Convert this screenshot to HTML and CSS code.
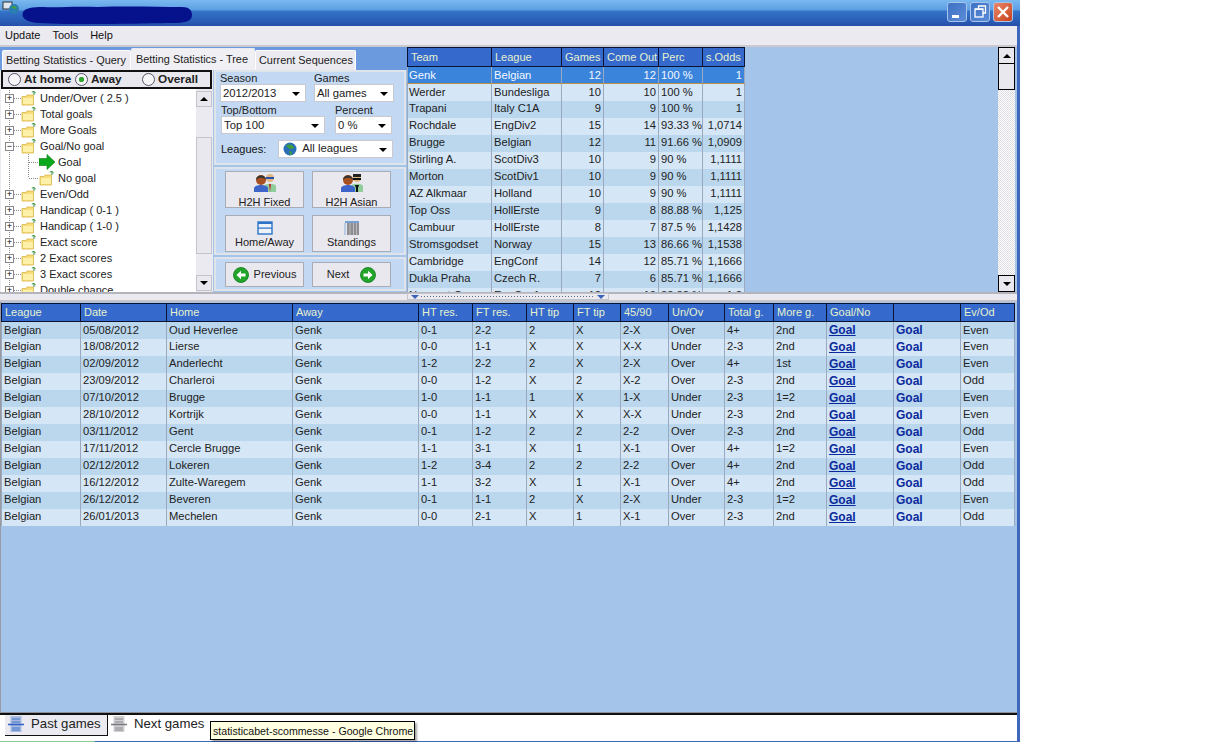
FILE: index.html
```html
<!DOCTYPE html>
<html lang="en">
<head>
<meta charset="utf-8">
<title>Betting Statistics</title>
<link rel="stylesheet" href="styles.css">
</head>
<body>
<svg class="defs" width="0" height="0" aria-hidden="true">
  <symbol id="folder" viewBox="0 0 16 16">
    <path d="M1 6.500h4l1-1.500h6.500v10H1z" fill="#f8dc78" stroke="#d8b850" stroke-width=".8"/>
    <path d="M2 8h10v6H2z" fill="#fdf0a8"/>
    <path d="M13 5V1.500M13 1.500l-2.200.6M13 1.500l1.800 1.600" stroke="#2f8f3f" stroke-width="1" fill="none"/>
  </symbol>
  <symbol id="green-left" viewBox="0 0 16 16">
    <circle cx="8" cy="8" r="7.500" fill="#22a52a" stroke="#0d7a1a" stroke-width=".8"/>
    <path d="M3.500 8 8 3.800v2.700h4.500v3H8v2.700z" fill="#fff"/>
  </symbol>
  <symbol id="green-right" viewBox="0 0 16 16">
    <circle cx="8" cy="8" r="7.500" fill="#22a52a" stroke="#0d7a1a" stroke-width=".8"/>
    <path d="M12.500 8 8 3.800v2.700H3.500v3H8v2.700z" fill="#fff"/>
  </symbol>
  <symbol id="sheet" viewBox="0 0 16 18">
    <path d="M2.500 1h11v16h-11z" fill="currentColor" opacity=".35"/>
    <path d="M4 4h8M4 7h8M4 13h8M4 15h8" stroke="currentColor" stroke-width=".8"/>
    <path d="M0 9.500h16" stroke="currentColor" stroke-width="1.500"/>
  </symbol>
</svg>

<div class="window">
  <header class="titlebar">
    <svg class="app-icon" width="20" height="14" viewBox="0 0 20 14"><rect x="1" y="1" width="9" height="7" fill="#dfe6ef" stroke="#333"/><circle cx="12" cy="8" r="5" fill="#2a7fb0"/><path d="M9 6c2-2 5-1 6 1-2 2-4 0-6-1z" fill="#3ea03e"/></svg>
    <svg class="redaction" width="170" height="18" viewBox="0 0 170 18"><path d="M1 6c2-4 10-5 20-5 15 1 30-1 55 0 30-1 60 0 84 0 7 0 10 3 10 8 0 6-6 8-18 8-16 0-40 1-75 1-25 0-48 0-60-1C4 16-1 12 1 6z" fill="#06118c"/></svg>
    <div class="win-buttons">
      <span class="win-btn"><svg width="18" height="18" viewBox="0 0 18 18"><rect x="4" y="12" width="7" height="3" fill="#fff"/></svg></span>
      <span class="win-btn"><svg width="18" height="18" viewBox="0 0 18 18"><path d="M7.500 5.500V3h7v7h-3" fill="none" stroke="#fff" stroke-width="1.300"/><rect x="4" y="6" width="8" height="8" fill="none" stroke="#fff" stroke-width="1.300"/><rect x="4" y="5.500" width="8" height="1.500" fill="#fff"/></svg></span>
      <span class="win-btn close"><svg width="18" height="18" viewBox="0 0 18 18"><path d="M4 4l10 10M14 4 4 14" stroke="#fff" stroke-width="2.400"/></svg></span>
    </div>
  </header>

  <nav class="menubar"><span>Update</span><span>Tools</span><span>Help</span></nav>

  <section class="top">
    <div class="left">
      <div class="tabs">
        <span class="tab tab-query">Betting Statistics - Query</span>
        <span class="tab tab-tree active">Betting Statistics - Tree</span>
        <span class="tab tab-seq">Current Sequences</span>
      </div>
      <div class="left-body">
        <div class="tree-col">
          <div class="radios">
            <span class="radio r1"><i class="dot"></i>At home</span>
            <span class="radio r2"><i class="dot on"></i>Away</span>
            <span class="radio r3"><i class="dot"></i>Overall</span>
          </div>
          <div class="tree-wrap">
            <ul class="tree">
              <li><b class="exp">+</b><svg class="ico"><use href="#folder"/></svg>Under/Over ( 2.5 )</li>
              <li><b class="exp">+</b><svg class="ico"><use href="#folder"/></svg>Total goals</li>
              <li><b class="exp">+</b><svg class="ico"><use href="#folder"/></svg>More Goals</li>
              <li><b class="exp">−</b><svg class="ico"><use href="#folder"/></svg>Goal/No goal</li>
              <li class="child"><svg class="ico" viewBox="0 0 16 16"><path d="M0 4.500h8V.5L16 8l-8 7.500v-4H0z" fill="#0ca81c" stroke="#087a12" stroke-width=".6"/></svg>Goal</li>
              <li class="child last"><svg class="ico"><use href="#folder"/></svg>No goal</li>
              <li><b class="exp">+</b><svg class="ico"><use href="#folder"/></svg>Even/Odd</li>
              <li><b class="exp">+</b><svg class="ico"><use href="#folder"/></svg>Handicap ( 0-1 )</li>
              <li><b class="exp">+</b><svg class="ico"><use href="#folder"/></svg>Handicap ( 1-0 )</li>
              <li><b class="exp">+</b><svg class="ico"><use href="#folder"/></svg>Exact score</li>
              <li><b class="exp">+</b><svg class="ico"><use href="#folder"/></svg>2 Exact scores</li>
              <li><b class="exp">+</b><svg class="ico"><use href="#folder"/></svg>3 Exact scores</li>
              <li><b class="exp">+</b><svg class="ico"><use href="#folder"/></svg>Double chance</li>
            </ul>
            <div class="tree-scroll">
              <span class="sb-btn soft up"></span>
              <span class="sb-gap"></span>
              <span class="sb-thumb soft"></span>
              <span class="sb-btn soft down"></span>
            </div>
          </div>
        </div>
        <div class="side">
          <div class="panel filters">
            <div class="f-row">
              <label class="f-field w-season">Season<span class="select">2012/2013</span></label>
              <label class="f-field w-games">Games<span class="select">All games</span></label>
            </div>
            <div class="f-row">
              <label class="f-field w-top">Top/Bottom<span class="select">Top 100</span></label>
              <label class="f-field w-pct">Percent<span class="select">0 %</span></label>
            </div>
            <div class="f-leagues">
              <span>Leagues:</span>
              <span class="select w-leagues"><svg class="globe" width="14" height="14" viewBox="0 0 14 14"><circle cx="7" cy="7" r="6.500" fill="#2a6fb5"/><path d="M3 3.500c3-2 7-1 8 2-2 3-6 1-8-2zM6 9c2 0 3 1 3 3l-2 1z" fill="#3e9e3e"/></svg>All leagues</span>
            </div>
          </div>
          <div class="panel actions">
            <button class="btn tall h2h">
              <svg width="24" height="20" viewBox="0 0 24 20"><circle cx="17" cy="5" r="4" fill="#e0b880"/><path d="M13 4h8v2h-8z" fill="#2b4fb0"/><path d="M11 19v-6c1-3 11-3 12 0v6z" fill="#8fce9a"/><path d="M16 11h2l-1 8z" fill="#c8202a"/><circle cx="8" cy="7" r="5" fill="#a85020"/><path d="M3 7c0-6 10-6 10 0-2-3-8-3-10 0z" fill="#333"/><path d="M1 19v-4c1-4 13-4 14 0v4z" fill="#3d64c8"/></svg>
              H2H Fixed
            </button>
            <button class="btn tall h2h">
              <svg width="24" height="20" viewBox="0 0 24 20"><circle cx="17" cy="5" r="4" fill="#e0b880"/><path d="M13 1h8v3h-8z" fill="#222"/><path d="M13 5h8v2h-8z" fill="#111"/><path d="M11 19v-6c1-3 11-3 12 0v6z" fill="#8fce9a"/><path d="M15 12h4l-1 3h-2zM16 15h2v4h-2z" fill="#111"/><circle cx="8" cy="7" r="5" fill="#a85020"/><path d="M3 7c0-6 10-6 10 0-2-3-8-3-10 0z" fill="#333"/><path d="M1 19v-4c1-4 13-4 14 0v4z" fill="#3d64c8"/></svg>
              H2H Asian
            </button>
            <button class="btn tall view">
              <svg width="16" height="14" viewBox="0 0 16 14"><rect x="1" y="1" width="14" height="12" fill="#eef3fb" stroke="#2d74c8" stroke-width="1.400"/><path d="M1 1h14v2H1zM1 6.500h14v1.200H1z" fill="#2d74c8"/></svg>
              Home/Away
            </button>
            <button class="btn tall view">
              <svg width="16" height="14" viewBox="0 0 16 14"><path d="M1 1h14" stroke="#2d74c8" stroke-width="1.200"/><path d="M1 2.500v11" stroke="#2d74c8" stroke-width="1" stroke-dasharray="1 1"/><path d="M3 3h12M3 5h12M3 7h12M3 9h12M3 11h12M3 13h12" stroke="#333" stroke-width="1"/><path d="M6 2v12M9.500 2v12M12.500 2v12" stroke="#e9e8ee" stroke-width=".5"/></svg>
              Standings
            </button>
          </div>
          <div class="panel nav">
            <button class="btn wide"><svg width="16" height="16"><use href="#green-left"/></svg>Previous</button>
            <button class="btn wide"><span>Next</span><svg width="16" height="16"><use href="#green-right"/></svg></button>
          </div>
        </div>
      </div>
    </div>

    <div class="top-table-wrap">
      <table class="grid teams">
        <thead><tr><th>Team</th><th>League</th><th>Games</th><th>Come Out</th><th>Perc</th><th>s.Odds</th></tr></thead>
        <tbody>
          <tr class="sel"><td>Genk</td><td>Belgian</td><td>12</td><td>12</td><td>100 %</td><td>1</td></tr>
          <tr><td>Werder</td><td>Bundesliga</td><td>10</td><td>10</td><td>100 %</td><td>1</td></tr>
          <tr><td>Trapani</td><td>Italy C1A</td><td>9</td><td>9</td><td>100 %</td><td>1</td></tr>
          <tr><td>Rochdale</td><td>EngDiv2</td><td>15</td><td>14</td><td>93.33 %</td><td>1,0714</td></tr>
          <tr><td>Brugge</td><td>Belgian</td><td>12</td><td>11</td><td>91.66 %</td><td>1,0909</td></tr>
          <tr><td>Stirling A.</td><td>ScotDiv3</td><td>10</td><td>9</td><td>90 %</td><td>1,1111</td></tr>
          <tr><td>Morton</td><td>ScotDiv1</td><td>10</td><td>9</td><td>90 %</td><td>1,1111</td></tr>
          <tr><td>AZ Alkmaar</td><td>Holland</td><td>10</td><td>9</td><td>90 %</td><td>1,1111</td></tr>
          <tr><td>Top Oss</td><td>HollErste</td><td>9</td><td>8</td><td>88.88 %</td><td>1,125</td></tr>
          <tr><td>Cambuur</td><td>HollErste</td><td>8</td><td>7</td><td>87.5 %</td><td>1,1428</td></tr>
          <tr><td>Stromsgodset</td><td>Norway</td><td>15</td><td>13</td><td>86.66 %</td><td>1,1538</td></tr>
          <tr><td>Cambridge</td><td>EngConf</td><td>14</td><td>12</td><td>85.71 %</td><td>1,1666</td></tr>
          <tr><td>Dukla Praha</td><td>Czech R.</td><td>7</td><td>6</td><td>85.71 %</td><td>1,1666</td></tr>
          <tr><td>Newport Co.</td><td>EngConf</td><td>12</td><td>10</td><td>83.33 %</td><td>1,2</td></tr>
        </tbody>
      </table>
    </div>

    <div class="main-scroll">
      <span class="sb-btn hard up"></span>
      <span class="sb-thumb hard"></span>
      <span class="sb-track"></span>
      <span class="sb-btn hard down"></span>
    </div>
  </section>

  <div class="splitter">
    <div class="grip"><i class="tri"></i><span class="dots"></span><i class="tri"></i></div>
  </div>

  <section class="bottom">
    <table class="grid games">
      <thead><tr><th>League</th><th>Date</th><th>Home</th><th>Away</th><th>HT res.</th><th>FT res.</th><th>HT tip</th><th>FT tip</th><th>45/90</th><th>Un/Ov</th><th>Total g.</th><th>More g.</th><th>Goal/No</th><th></th><th>Ev/Od</th></tr></thead>
      <tbody>
        <tr><td>Belgian</td><td>05/08/2012</td><td>Oud Heverlee</td><td>Genk</td><td>0-1</td><td>2-2</td><td>2</td><td>X</td><td>2-X</td><td>Over</td><td>4+</td><td>2nd</td><td><a class="lnk u">Goal</a></td><td><a class="lnk">Goal</a></td><td>Even</td></tr>
        <tr><td>Belgian</td><td>18/08/2012</td><td>Lierse</td><td>Genk</td><td>0-0</td><td>1-1</td><td>X</td><td>X</td><td>X-X</td><td>Under</td><td>2-3</td><td>2nd</td><td><a class="lnk u">Goal</a></td><td><a class="lnk">Goal</a></td><td>Even</td></tr>
        <tr><td>Belgian</td><td>02/09/2012</td><td>Anderlecht</td><td>Genk</td><td>1-2</td><td>2-2</td><td>2</td><td>X</td><td>2-X</td><td>Over</td><td>4+</td><td>1st</td><td><a class="lnk u">Goal</a></td><td><a class="lnk">Goal</a></td><td>Even</td></tr>
        <tr><td>Belgian</td><td>23/09/2012</td><td>Charleroi</td><td>Genk</td><td>0-0</td><td>1-2</td><td>X</td><td>2</td><td>X-2</td><td>Over</td><td>2-3</td><td>2nd</td><td><a class="lnk u">Goal</a></td><td><a class="lnk">Goal</a></td><td>Odd</td></tr>
        <tr><td>Belgian</td><td>07/10/2012</td><td>Brugge</td><td>Genk</td><td>1-0</td><td>1-1</td><td>1</td><td>X</td><td>1-X</td><td>Under</td><td>2-3</td><td>1=2</td><td><a class="lnk u">Goal</a></td><td><a class="lnk">Goal</a></td><td>Even</td></tr>
        <tr><td>Belgian</td><td>28/10/2012</td><td>Kortrijk</td><td>Genk</td><td>0-0</td><td>1-1</td><td>X</td><td>X</td><td>X-X</td><td>Under</td><td>2-3</td><td>2nd</td><td><a class="lnk u">Goal</a></td><td><a class="lnk">Goal</a></td><td>Even</td></tr>
        <tr><td>Belgian</td><td>03/11/2012</td><td>Gent</td><td>Genk</td><td>0-1</td><td>1-2</td><td>2</td><td>2</td><td>2-2</td><td>Over</td><td>2-3</td><td>2nd</td><td><a class="lnk u">Goal</a></td><td><a class="lnk">Goal</a></td><td>Odd</td></tr>
        <tr><td>Belgian</td><td>17/11/2012</td><td>Cercle Brugge</td><td>Genk</td><td>1-1</td><td>3-1</td><td>X</td><td>1</td><td>X-1</td><td>Over</td><td>4+</td><td>1=2</td><td><a class="lnk u">Goal</a></td><td><a class="lnk">Goal</a></td><td>Even</td></tr>
        <tr><td>Belgian</td><td>02/12/2012</td><td>Lokeren</td><td>Genk</td><td>1-2</td><td>3-4</td><td>2</td><td>2</td><td>2-2</td><td>Over</td><td>4+</td><td>2nd</td><td><a class="lnk u">Goal</a></td><td><a class="lnk">Goal</a></td><td>Odd</td></tr>
        <tr><td>Belgian</td><td>16/12/2012</td><td>Zulte-Waregem</td><td>Genk</td><td>1-1</td><td>3-2</td><td>X</td><td>1</td><td>X-1</td><td>Over</td><td>4+</td><td>2nd</td><td><a class="lnk u">Goal</a></td><td><a class="lnk">Goal</a></td><td>Odd</td></tr>
        <tr><td>Belgian</td><td>26/12/2012</td><td>Beveren</td><td>Genk</td><td>0-1</td><td>1-1</td><td>2</td><td>X</td><td>2-X</td><td>Under</td><td>2-3</td><td>1=2</td><td><a class="lnk u">Goal</a></td><td><a class="lnk">Goal</a></td><td>Even</td></tr>
        <tr><td>Belgian</td><td>26/01/2013</td><td>Mechelen</td><td>Genk</td><td>0-0</td><td>2-1</td><td>X</td><td>1</td><td>X-1</td><td>Over</td><td>2-3</td><td>2nd</td><td><a class="lnk u">Goal</a></td><td><a class="lnk">Goal</a></td><td>Odd</td></tr>
      </tbody>
    </table>
  </section>

  <footer class="bottom-tabs">
    <span class="btab current"><svg class="sheet blue" width="16" height="18"><use href="#sheet"/></svg>Past games</span>
    <span class="btab"><svg class="sheet grey" width="16" height="18"><use href="#sheet"/></svg>Next games</span>
    <span class="tooltip">statisticabet-scommesse - Google Chrome</span>
  </footer>
  <div class="taskbar"><span class="start"></span></div>
</div>
</body>
</html>
```

FILE: styles.css
```css
* { box-sizing: border-box; }
html, body { margin: 0; padding: 0; background: #fff; }
body { width: 1228px; height: 742px; overflow: hidden; font: 11.3px/1 "Liberation Sans", Arial, sans-serif; color: #111; }
.defs { position: absolute; }
svg { display: block; flex: none; }

.window { width: 1020px; height: 742px; display: flex; flex-direction: column; border-right: 3px solid #3f68bd; position: relative; }

/* title bar */
.titlebar { height: 26px; width: 1020px; flex: none; display: flex; align-items: center; padding: 0 4px 0 2px; background: linear-gradient(#79b8ef 0, #5d9fe3 10px, #3474c9 11px, #2a5fb8 20px, #264fa8 26px); }
.app-icon { margin-top: -11px; }
.redaction { margin: 3px 0 0 0; }
.win-buttons { margin-left: auto; display: flex; gap: 3px; padding-right: 3px; margin-top: -2px; }
.win-btn { width: 20px; height: 20px; border: 1px solid #a9c4ea; border-radius: 3px; background: linear-gradient(135deg, #3f71c4, #5a8cd8); }
.win-btn.close { background: linear-gradient(135deg, #e8886a, #c8421c); }

/* menu */
.menubar { height: 21px; flex: none; display: flex; align-items: center; gap: 12px; padding: 0 5px 1px; background: #ebeaf0; border-bottom: 2px solid #c9c9cf; font-size: 11px; }

/* top */
.top { height: 245px; flex: none; display: flex; background: #a4c4ea; overflow: hidden; }
.left { width: 407px; flex: none; display: flex; flex-direction: column; }
.tabs { height: 23px; flex: none; display: flex; align-items: flex-end; padding-left: 2px; background: #6b9ade; }
.tab { height: 20px; padding: 4px 0 0 3px; background: #ebeaf0; border: 1px solid #fff; border-bottom: 0; border-radius: 2px 2px 0 0; white-space: nowrap; color: #222; font-size: 10.9px; }
.tab-query { width: 129px; }
.tab-tree { width: 124px; height: 22px; padding: 5px 0 0 4px; border-color: #ebeaf0; background: #f0f0f4; }
.tab-seq { width: 101px; }
.left-body { flex: 1; display: flex; min-height: 0; }

.tree-col { width: 213px; flex: none; display: flex; flex-direction: column; padding-left: 1px; min-height: 0; background: #ebeaf0; }
.radios { height: 19px; flex: none; display: flex; align-items: center; border: 2px solid #111; background: #e8e8ee; font-weight: bold; font-size: 11.800px; color: #222; width: 211px; }
.radio { display: flex; align-items: center; gap: 3px; }
.r1 { padding-left: 5px; width: 72px; }
.r2 { width: 67px; }
.dot { width: 13px; height: 13px; border-radius: 50%; border: 1px solid #556; background: #f6f6f8; display: block; }
.dot.on { background: radial-gradient(circle, #32a832 0 2.500px, #f6f6f8 3px); }
.tree-wrap { flex: 1; display: flex; min-height: 0; overflow: hidden; }
.tree { list-style: none; margin: 0; padding: 1px 0 0 0; width: 195px; height: 203px; overflow: hidden; background: #fff; }
.tree li {
  height: 16px; display: flex; align-items: center; padding-left: 4px; white-space: nowrap; color: #222; font-size: 11px;
  background:
    repeating-linear-gradient(90deg, #8a8a8a 0 1px, transparent 1px 2px) 13px 50% / 7px 1px no-repeat,
    repeating-linear-gradient(#8a8a8a 0 1px, transparent 1px 2px) 8px 0 / 1px 100% no-repeat;
}
.exp { width: 9px; height: 9px; border: 1px solid #888; background: #fff; font: 9px/7px "Liberation Sans", sans-serif; text-align: center; color: #000; margin-right: 7px; flex: none; }
.ico { width: 16px; height: 16px; margin-right: 3px; }
.tree li.child {
  padding-left: 38px;
  background:
    repeating-linear-gradient(90deg, #8a8a8a 0 1px, transparent 1px 2px) 28px 50% / 10px 1px no-repeat,
    repeating-linear-gradient(#8a8a8a 0 1px, transparent 1px 2px) 27px 0 / 1px 100% no-repeat,
    repeating-linear-gradient(#8a8a8a 0 1px, transparent 1px 2px) 8px 0 / 1px 100% no-repeat;
}
.tree li.child.last {
  background:
    repeating-linear-gradient(90deg, #8a8a8a 0 1px, transparent 1px 2px) 28px 50% / 10px 1px no-repeat,
    repeating-linear-gradient(#8a8a8a 0 1px, transparent 1px 2px) 27px 0 / 1px 50% no-repeat,
    repeating-linear-gradient(#8a8a8a 0 1px, transparent 1px 2px) 8px 0 / 1px 100% no-repeat;
}
.tree-scroll { width: 16px; height: 203px; padding-top: 2px; display: flex; flex-direction: column; background: #ebeaf0; }
.sb-btn { height: 16px; flex: none; display: flex; align-items: center; justify-content: center; }
.sb-btn::before { content: ""; width: 0; height: 0; border-left: 4px solid transparent; border-right: 4px solid transparent; }
.sb-btn.up::before { border-bottom: 4px solid #000; }
.sb-btn.down::before { border-top: 4px solid #000; }
.soft { background: #e9e8ee; border: 1px solid #c4c4cc; }
.sb-gap { height: 30px; flex: none; }
.sb-thumb.soft { height: 117px; flex: none; margin-bottom: 21px; }

.side { width: 193px; flex: none; display: flex; flex-direction: column; gap: 2px; padding: 0 0 0 1px; }
.panel { border: 2px solid #dfe3ea; background: #c3d9f3; }
.filters { height: 95px; flex: none; padding: 0 0 0 4px; }
.f-row { display: flex; height: 32px; }
.f-field { display: flex; flex-direction: column; font-size: 11px; color: #222; line-height: 12px; padding-left: 0; }
.select { height: 18px; background: #fff; border: 1px solid #c9c9cf; display: flex; align-items: center; padding-left: 2px; position: relative; color: #222; font-size: 11.3px; }
.select::after { content: ""; position: absolute; right: 5px; top: 7px; border-left: 4px solid transparent; border-right: 4px solid transparent; border-top: 4px solid #000; }
.w-season { width: 86px; margin-right: 8px; }
.w-season .select { width: 86px; }
.w-games { width: 80px; }
.w-top { width: 105px; margin-right: 10px; padding-left: 1px; }
.w-pct { width: 57px; }
.f-leagues { display: flex; align-items: center; margin-top: 4px; padding-left: 1px; font-size: 11px; height: 18px; gap: 12px; }
.w-leagues { width: 115px; padding-left: 4px; gap: 5px; }

.actions { height: 88px; flex: none; display: grid; grid-template-columns: 79px 79px; gap: 6px 8px; padding: 2px 0 0 9px; }
.btn { font: inherit; color: #222; background: #e9e8ee; border: 1px solid #a8acb6; padding: 0; display: flex; align-items: center; justify-content: center; }
.btn.tall { flex-direction: column; justify-content: flex-start; height: 37px; font-size: 11px; }
.btn.h2h { gap: 4px; padding-top: 1px; }
.btn.view { gap: 2px; padding-top: 5px; }
.nav { height: 34px; flex: none; display: flex; gap: 8px; padding: 3px 0 0 9px; }
.btn.wide { width: 79px; height: 25px; gap: 5px; font-size: 11px; }
.btn.wide span { margin-right: 6px; }

/* tables */
.grid { border-collapse: collapse; table-layout: fixed; font-size: 11.2px; color: #222; }
.grid th { height: 18px; padding: 0 0 0 3px; background: #3569cc; color: #e6f2cf; font-weight: normal; font-size: 11px; text-align: left; border: 1px solid #0a1330; white-space: nowrap; overflow: hidden; }
.grid td { height: 17px; padding: 0 2px; border-left: 1px solid #9aa9bd; border-right: 1px solid #9aa9bd; white-space: nowrap; overflow: hidden; }

.top-table-wrap { width: 591px; flex: none; height: 245px; overflow: hidden; }
.teams { width: 337px; margin: 0; }
.teams th { height: 19px; }
.teams th:nth-child(1) { width: 84px; }
.teams th:nth-child(2) { width: 70px; }
.teams th:nth-child(3) { width: 42px; }
.teams th:nth-child(4) { width: 55px; }
.teams th:nth-child(5) { width: 44px; }
.teams th:nth-child(6) { width: 42px; }
.teams td:nth-child(3), .teams td:nth-child(4), .teams td:nth-child(6) { text-align: right; }
.teams td:first-child { padding-left: 1px; }
.teams tbody tr:nth-child(even) td { background: #d5e6f6; }
.teams tbody tr:nth-child(odd) td { background: #bad7ee; }
.teams tbody tr.sel td { background: #3b84dc; color: #f4f8ff; padding-top: 1px; border-top: 1px solid #8c8c90; border-bottom: 1px solid #b8904c; }

.main-scroll { width: 17px; flex: none; display: flex; flex-direction: column; height: 245px; }
.hard { background: #e9e8ee; border: 1px solid #000; }
.sb-btn.hard { height: 17px; }
.sb-thumb.hard { height: 27px; flex: none; margin-top: -1px; }
.sb-track { flex: 1; background: repeating-conic-gradient(#fff 0 25%, #dcdce2 0 50%) 0 0 / 2px 2px; }

.splitter { height: 10px; flex: none; background: #ebeaf0; border-top: 2px solid #b4b4bc; border-bottom: 2px solid #c4c4ca; padding-left: 407px; display: flex; }
.grip { width: 202px; height: 7px; margin-top: -1px; background: #ebeaf0; border: 1px solid #c4c4ca; display: flex; align-items: center; padding: 0 3px; gap: 2px; justify-content: space-between; }
.tri { width: 0; height: 0; border-left: 4px solid transparent; border-right: 4px solid transparent; border-top: 4px solid #3a62b8; flex: none; }
.dots { flex: 1; height: 1px; background: repeating-linear-gradient(90deg, #5a6a90 0 1px, transparent 1px 3px); }

.bottom { height: 411px; flex: none; background: #a4c4ea; border-left: 1px solid #9a9aa2; border-bottom: 1px solid #8a8f9a; padding-top: 1px; overflow: hidden; }
.games { width: 1014px; }
.games th:nth-child(1) { width: 79px; }
.games th:nth-child(2) { width: 86px; }
.games th:nth-child(3) { width: 126px; }
.games th:nth-child(4) { width: 126px; }
.games th:nth-child(5) { width: 54px; }
.games th:nth-child(6) { width: 54px; }
.games th:nth-child(7) { width: 47px; }
.games th:nth-child(8) { width: 47px; }
.games th:nth-child(9) { width: 48px; }
.games th:nth-child(10) { width: 56px; }
.games th:nth-child(11) { width: 49px; }
.games th:nth-child(12) { width: 53px; }
.games th:nth-child(13) { width: 67px; }
.games th:nth-child(14) { width: 67px; }
.games th:nth-child(15) { width: 54px; }
.games tbody tr:nth-child(odd) td { background: #bad7ee; }
.games tbody tr:nth-child(even) td { background: #d5e6f6; }
.lnk { color: #0a2a9c; font-weight: bold; font-size: 12px; }
.lnk.u { text-decoration: underline; }

/* bottom tabs */
.bottom-tabs { height: 28px; flex: none; position: relative; background: #fff; border-top: 2px solid #111; display: flex; align-items: flex-start; padding-left: 5px; font-size: 13.200px; color: #222; }
.btab { height: 21px; display: flex; align-items: center; gap: 7px; padding: 0 5px 3px 3px; white-space: nowrap; }
.btab.current { width: 103px; background: #ebeaf0; border-right: 1px solid #111; border-bottom: 1px solid #111; }
.sheet.blue { color: #2f62c4; }
.sheet.grey { color: #77777d; }
.tooltip { position: absolute; left: 210px; top: 6px; height: 19px; width: 205px; padding: 4px 0 0 2px; background: #ffffe1; border: 1px solid #000; font-size: 10.6px; white-space: nowrap; color: #111; box-shadow: 2px 2px 2px rgba(0,0,0,.35); z-index: 2; }
.taskbar { flex: 1; background: #3c68bd; }
.start { display: block; width: 95px; height: 100%; background: #8ec88e; border-radius: 0 6px 0 0; }
```
